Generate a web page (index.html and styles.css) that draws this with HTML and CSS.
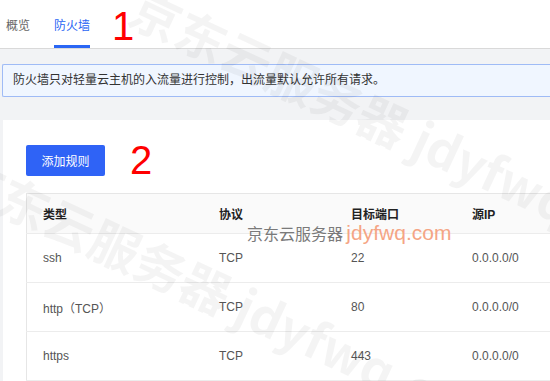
FILE: index.html
```html
<!DOCTYPE html>
<html>
<head lang="zh">
    <meta charset="utf-8">
    <title>防火墙</title>
    <link rel="stylesheet" href="styles.css">
</head>
<body>
<main class="page">
    <nav class="tabs">
        <span class="tab">概览</span>
        <span class="tab active">防火墙</span>
        <span class="mark mark-one">1</span>
    </nav>
    <div class="alert">防火墙只对轻量云主机的入流量进行控制，出流量默认允许所有请求。</div>
    <section class="card">
        <div class="toolbar">
            <button class="btn">添加规则</button>
            <span class="mark">2</span>
        </div>
        <table class="rules">
            <thead>
                <tr><th class="c1">类型</th><th class="c2">协议</th><th class="c3">目标端口</th><th>源IP</th></tr>
            </thead>
            <tbody>
                <tr><td>ssh</td><td>TCP</td><td>22</td><td>0.0.0.0/0</td></tr>
                <tr><td>http（TCP）</td><td>TCP</td><td>80</td><td>0.0.0.0/0</td></tr>
                <tr><td>https</td><td>TCP</td><td>443</td><td>0.0.0.0/0</td></tr>
            </tbody>
        </table>
    </section>
</main>
<div class="wm wm-big wm-a">京东云服务器 jdyfwq.com</div>
<div class="wm wm-big wm-b">京东云服务器 jdyfwq.com</div>
<div class="wm-small"><span class="cn">京东云服务器</span> <span class="en">jdyfwq.com</span></div>
</body>
</html>
```

FILE: styles.css
```css
html, body {
    margin: 0;
    overflow: hidden;
    background: #f2f3f5;
}

body {
    font-family: "Liberation Sans", "Noto Sans CJK SC", sans-serif;
    font-size: 12px;
    color: #333;
}

.page {
    width: 700px;
    height: 381px;
}

.tabs {
    display: flex;
    align-items: stretch;
    height: 48px;
    padding-left: 6px;
    background: #fff;
    border-bottom: 1px solid #d9d9d9;
}

.tab {
    display: flex;
    align-items: center;
    margin-right: 24px;
    padding-top: 3px;
    border-bottom: 3px solid transparent;
    color: #666;
    font-size: 12px;
}

.tab.active {
    color: #2a66f4;
    border-bottom-color: #2a66f4;
}

.mark {
    color: #f00;
    font-family: "Liberation Sans", sans-serif;
    font-size: 40px;
    line-height: 31px;
}

.mark-one {
    margin-left: -2px;
    align-self: center;
    padding-top: 4px;
}

.alert {
    margin: 15px 0 0 2px;
    height: 31px;
    line-height: 31px;
    padding-left: 10px;
    background: #f0f6ff;
    border: 1px solid #9fbbf6;
    border-right: none;
    border-radius: 2px 0 0 2px;
    color: #333;
}

.card {
    margin: 23px 0 0 3px;
    padding: 25px 0 0 23px;
    background: #fff;
    height: 300px;
}

.toolbar {
    display: flex;
    align-items: center;
    gap: 25px;
    height: 31px;
}

.btn {
    width: 79px;
    height: 31px;
    border: none;
    border-radius: 2px;
    background: #2f63f6;
    color: #fff;
    font-family: inherit;
    font-size: 12px;
}

.rules {
    margin-top: 17px;
    width: 650px;
    border-collapse: collapse;
    border: 1px solid #e6e6e6;
    border-right: none;
}

.rules th, .rules td {
    padding: 0 0 0 16px;
    text-align: left;
    border-bottom: 1px solid #ececec;
}

.rules th {
    height: 39px;
    background: #fafafa;
    font-weight: bold;
    color: #222;
}

.rules td {
    height: 48px;
    color: #555;
}

.c1 { width: 160px; }
.c2 { width: 116px; }
.c3 { width: 105px; }

.wm {
    position: absolute;
    white-space: nowrap;
    pointer-events: none;
}

.wm-big {
    font-family: "Noto Sans CJK SC", sans-serif;
    font-weight: bold;
    font-size: 50px;
    color: rgba(0, 0, 0, 0.045);
    transform-origin: 0 0;
    transform: rotate(25deg);
}

.wm-a {
    left: 150px;
    top: -30px;
}

.wm-b {
    left: -27px;
    top: 137px;
}

.wm-small {
    position: absolute;
    left: 247px;
    top: 219px;
    white-space: nowrap;
    line-height: 28px;
}

.wm-small .cn {
    font-family: "Noto Sans CJK SC", sans-serif;
    font-size: 16px;
    color: #7a7a7a;
}

.wm-small .en {
    font-family: "Liberation Sans", sans-serif;
    font-size: 21px;
    color: #f5a585;
}
```
